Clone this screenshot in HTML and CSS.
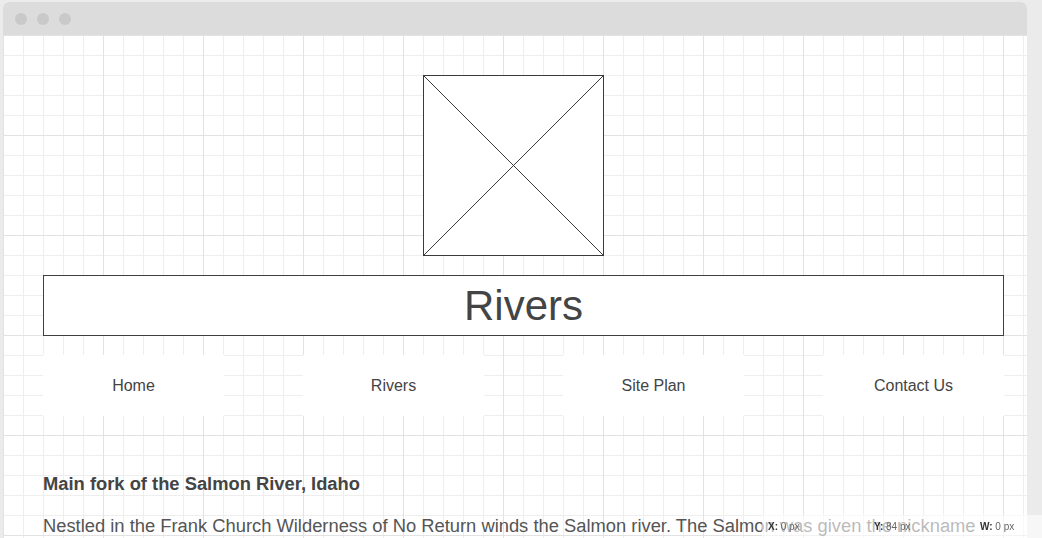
FILE: index.html
```html
<!DOCTYPE html>
<html lang="en">
<head>
<meta charset="utf-8">
<title>Rivers</title>
<link rel="stylesheet" href="styles.css">
</head>
<body>
<div class="window">
  <div class="titlebar">
    <span class="dot"></span><span class="dot"></span><span class="dot"></span>
  </div>
  <div class="canvas">
    <div class="logo">
      <svg width="181" height="181" viewBox="0 0 181 181" preserveAspectRatio="none">
        <rect x="0.5" y="0.5" width="180" height="180" fill="#fff" stroke="#3a3a3a" stroke-width="1"/>
        <line x1="0.5" y1="0.5" x2="180.5" y2="180.5" stroke="#3a3a3a" stroke-width="1"/>
        <line x1="180.5" y1="0.5" x2="0.5" y2="180.5" stroke="#3a3a3a" stroke-width="1"/>
      </svg>
    </div>
    <div class="title">Rivers</div>
    <nav class="nav">
      <a class="nav-item">Home</a>
      <a class="nav-item">Rivers</a>
      <a class="nav-item">Site Plan</a>
      <a class="nav-item">Contact Us</a>
    </nav>
    <h2 class="heading">Main fork of the Salmon River, Idaho</h2>
    <p class="para">Nestled in the Frank Church Wilderness of No Return winds the Salmon river. The Salmon was given the nickname "The River of No Return" by early explorers.</p>
  </div>
</div>
<div class="coords">
  <span class="coord"><b>X:</b> 0 px</span>
  <span class="coord"><b>Y:</b> 84 px</span>
  <span class="coord coord-last"><b>W:</b> 0 px</span>
</div>
</body>
</html>
```
FILE: styles.css
```css
html, body {
  margin: 0;
  padding: 0;
  height: 100%;
  overflow: hidden;
}
body {
  background: #ebebeb;
  font-family: "Liberation Sans", Arial, sans-serif;
  color: #444;
}
.window {
  margin: 2px 0 0 3px;
  width: 1024px;
  min-height: 700px;
  background: #fff;
  border-radius: 6px 6px 0 0;
  overflow: hidden;
}
.titlebar {
  height: 33px;
  background: #dcdcdc;
  display: flex;
  align-items: center;
  gap: 10px;
  padding-left: 12px;
}
.dot {
  width: 12px;
  height: 12px;
  border-radius: 50%;
  background: #c9c9c9;
}
.canvas {
  min-height: 667px;
  padding: 40px 20px 0 40px;
  background-color: #fff;
  background-image:
    linear-gradient(to right, #e2e2e2 1px, transparent 1px),
    linear-gradient(to bottom, #e2e2e2 1px, transparent 1px),
    linear-gradient(to right, #eeeeee 1px, transparent 1px),
    linear-gradient(to bottom, #eeeeee 1px, transparent 1px);
  background-size: 100px 100px, 100px 100px, 20px 20px, 20px 20px;
}
.logo {
  margin-left: 380px;
  width: 181px;
  height: 181px;
}
.logo svg {
  display: block;
}
.title {
  margin-top: 19px;
  width: 961px;
  height: 61px;
  box-sizing: border-box;
  border: 1px solid #3f3f3f;
  background: #fff;
  display: flex;
  align-items: center;
  justify-content: center;
  font-size: 42px;
  color: #444;
}
.nav {
  margin-top: 19px;
  width: 961px;
  display: flex;
  justify-content: space-between;
}
.nav-item {
  width: 181px;
  height: 61px;
  background: #fff;
  display: flex;
  align-items: center;
  justify-content: center;
  font-size: 16px;
  color: #444;
}
.heading {
  margin: 58px 0 0 0;
  font-size: 18.35px;
  font-weight: bold;
  line-height: 20px;
  color: #444;
}
.para {
  width: 961px;
  margin: 21px 0 0 0;
  font-size: 18.35px;
  line-height: 22px;
  color: #555;
}
.coords {
  position: fixed;
  right: 0;
  bottom: 0;
  width: 280px;
  height: 23px;
  display: flex;
  align-items: center;
  background: rgba(255, 255, 255, 0.6);
  font-size: 10px;
  color: #666;
}
.coord {
  flex: none;
  width: 106px;
  padding-left: 6px;
  box-sizing: border-box;
}
.coord-last {
  width: 68px;
}
.coord b {
  color: #333;
}
```
